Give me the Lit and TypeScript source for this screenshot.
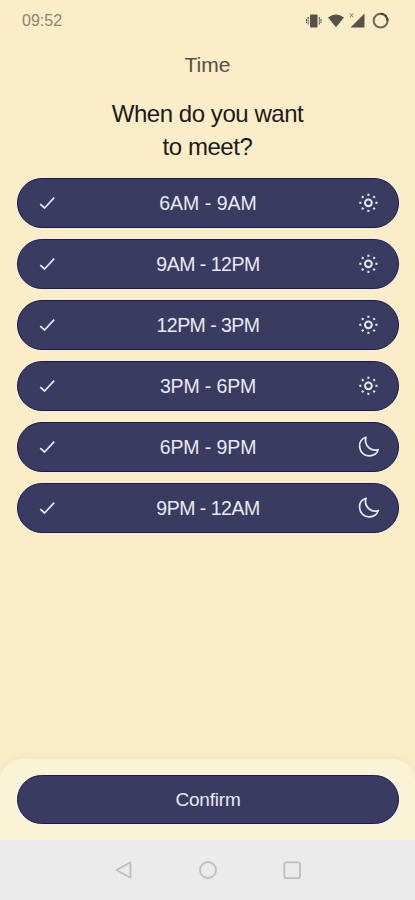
import { LitElement, html, css, svg } from "lit";
import { customElement } from "lit/decorators.js";
import { styleMap } from "lit/directives/style-map.js";

type Slot = { label: string; icon: "sun" | "moon"; tracking: number };

const SLOTS: Slot[] = [
  { label: "6AM - 9AM", icon: "sun", tracking: 0 },
  { label: "9AM - 12PM", icon: "sun", tracking: -0.5 },
  { label: "12PM - 3PM", icon: "sun", tracking: -0.55 },
  { label: "3PM - 6PM", icon: "sun", tracking: -0.15 },
  { label: "6PM - 9PM", icon: "moon", tracking: -0.1 },
  { label: "9PM - 12AM", icon: "moon", tracking: -0.5 },
];

const rays = [0, 45, 90, 135, 180, 225, 270, 315].map(
  (a) => svg`<path d="M12 2.9V5" transform="rotate(${a} 12 12)"/>`
);

const sun = html`<svg class="icon" width="24" height="24" viewBox="0 0 24 24">
  <g transform="translate(.4 -.2)">
    <circle cx="12" cy="12" r="3.4" stroke-width="2" />
    <g stroke-width="2.1">${rays}</g>
  </g>
</svg>`;

const moon = html`<svg class="icon" width="24" height="24" viewBox="0 0 24 24">
  <path d="M10 2.3C5.8 3.6 3.3 7.4 3.6 11.8C4 17 8.1 20.8 13 20.9C17.3 21 21 18.5 22.3 14.6C19.4 15.6 15.8 15.2 13.2 13C10 10.3 8.7 6.4 10 2.3Z" stroke-width="1.7" />
</svg>`;

const check = html`<svg class="icon" width="18" height="18" viewBox="0 0 18 18">
  <path d="M2.2 10.1L6.6 14L16.2 3.6" stroke-width="1.7" />
</svg>`;

@customElement("app-root")
export class AppRoot extends LitElement {
  static styles = css`
    :host {
      display: flex;
      flex-direction: column;
      height: 900px;
      background: #faedc8;
      font-family: "Liberation Sans", Arial, sans-serif;
      font-variant-ligatures: none;
      color: #1c1b19;
      overflow: hidden;
    }
    * { box-sizing: border-box; }
    svg { display: block; flex: none; }
    .status {
      display: flex;
      justify-content: space-between;
      align-items: center;
      height: 41px;
      padding: 0 25px 0 22px;
      font-size: 16px;
      color: #8d8570;
    }
    .title {
      margin: 11px 0 0;
      height: 26px;
      line-height: 26px;
      text-align: center;
      font-size: 21px;
      font-weight: 400;
      color: #55514a;
    }
    .question {
      margin: 19px 0 0;
      height: 66px;
      line-height: 33px;
      text-align: center;
      font-size: 24px;
      font-weight: 400;
      letter-spacing: -0.45px;
    }
    .slots {
      display: flex;
      flex-direction: column;
      gap: 11px;
      margin: 15px 16px 0 17px;
    }
    .pill {
      display: grid;
      align-items: center;
      width: 100%;
      border: 1px solid #17195a;
      border-radius: 25px;
      background: #393b60;
      color: #e9e9f3;
      font: inherit;
      text-align: center;
    }
    .slot {
      grid-template-columns: 22px 1fr 24px;
      height: 50px;
      padding: 0 18px 0 20px;
      font-size: 19.5px;
    }
    .icon {
      fill: none;
      stroke: #e9e9f3;
      stroke-linecap: butt;
      stroke-linejoin: round;
    }
    .sheet {
      margin-top: auto;
      height: 81px;
      padding: 16px 16px 0 17px;
      border-radius: 22px 22px 0 0;
      background: #fbf3d6;
      box-shadow: 0 -1px 8px rgba(190, 160, 90, 0.12);
    }
    .confirm {
      height: 49px;
      padding: 0;
      font-size: 19px;
      letter-spacing: -0.2px;
    }
    .nav {
      display: flex;
      justify-content: center;
      align-items: center;
      gap: 64px;
      height: 60px;
      background: #ebebeb;
    }
    .nav svg { fill: none; stroke: #bebebe; stroke-width: 1.8; stroke-linejoin: round; }
  `;

  render() {
    return html`
      <div class="status">
        <span>09:52</span>
        <svg width="84" height="20" viewBox="0 0 84 20" fill="#55524a">
          <rect x="4" y="3.5" width="7.5" height="13" rx="0.8" />
          <path d="M2.2 6V14M13.3 6V14M.5 8V12M15 8V12" stroke="#55524a" stroke-width="1.1" stroke-dasharray="2 .6" />
          <path d="M22 6.5Q30 .3 38 6.5L30 16.3Z" />
          <path d="M58.5 2.5V16.5H44.5Z" />
          <path d="M44 2.5L47.2 6.2M47.2 2.5L44 6.2" stroke="#77725f" stroke-width="1" />
          <circle cx="74.6" cy="9.7" r="6.9" fill="none" stroke="#6d6857" stroke-width="2" />
          <path d="M74.6 2.8A6.9 6.9 0 0 1 81.5 9.7" fill="none" stroke="#3e3b34" stroke-width="2" stroke-dasharray="3 1" />
        </svg>
      </div>
      <h1 class="title">Time</h1>
      <h2 class="question">When do you want<br />to meet?</h2>
      <div class="slots">
        ${SLOTS.map(
          (s) => html`<button class="pill slot">
            ${check}
            <span style=${styleMap({ letterSpacing: `${s.tracking}px` })}>${s.label}</span>
            ${s.icon === "sun" ? sun : moon}
          </button>`
        )}
      </div>
      <div class="sheet"><button class="pill confirm">Confirm</button></div>
      <div class="nav">
        <svg width="20" height="20" viewBox="0 0 20 20"><path d="M2.5 10L16.5 2.2V17.8Z" /></svg>
        <svg width="20" height="20" viewBox="0 0 20 20"><circle cx="10" cy="10" r="8" /></svg>
        <svg width="20" height="20" viewBox="0 0 20 20"><rect x="2.3" y="2.3" width="15.8" height="15.8" rx="2" /></svg>
      </div>
    `;
  }
}
